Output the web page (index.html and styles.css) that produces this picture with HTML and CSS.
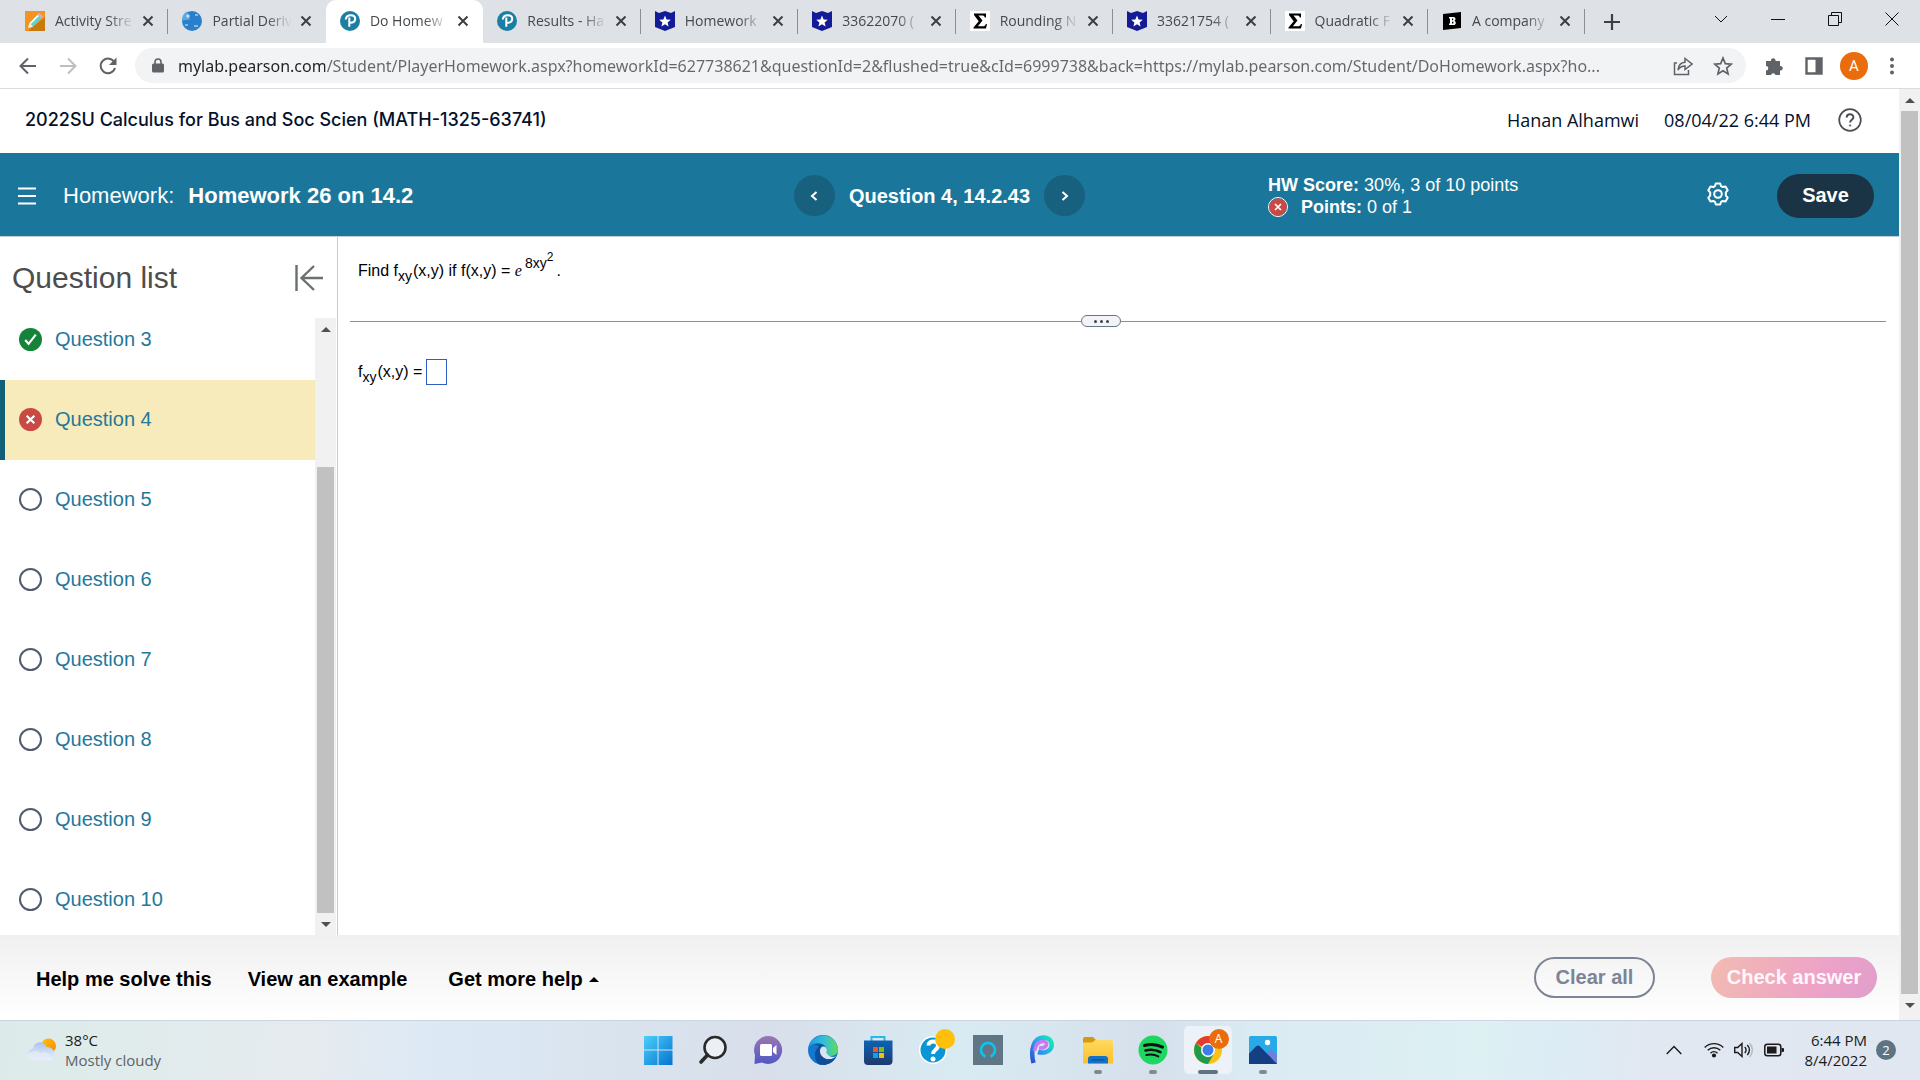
FILE: index.html
```html
<!DOCTYPE html>
<html lang="en">
<head>
<meta charset="utf-8">
<meta name="viewport" content="width=device-width, initial-scale=1">
<title>Do Homework - Homework 26 on 14.2</title>
<link rel="stylesheet" href="styles.css">
</head>
<body>
<svg class="defs" aria-hidden="true">
  <defs>
    <linearGradient id="win" x1="0" y1="0" x2="1" y2="1"><stop offset="0" stop-color="#4bd0fb"/><stop offset="1" stop-color="#0573d1"/></linearGradient>
    <linearGradient id="chat" x1="0" y1="0" x2="0" y2="1"><stop offset="0" stop-color="#9a77b4"/><stop offset="1" stop-color="#5058c4"/></linearGradient>
    <linearGradient id="edgeTop" x1="0" y1="0" x2="1" y2="0"><stop offset="0" stop-color="#1d9bdc"/><stop offset=".5" stop-color="#32bedd"/><stop offset="1" stop-color="#5fdc5c"/></linearGradient>
    <linearGradient id="store" x1="0" y1="0" x2="0" y2="1"><stop offset="0" stop-color="#0b64b4"/><stop offset="1" stop-color="#1f3a6b"/></linearGradient>
    <linearGradient id="swirl" x1="0" y1="1" x2="1" y2="0"><stop offset="0" stop-color="#2b4fd0"/><stop offset=".5" stop-color="#2f9df0"/><stop offset="1" stop-color="#12f0b4"/></linearGradient>
    <linearGradient id="folder" x1="0" y1="0" x2="0" y2="1"><stop offset="0" stop-color="#ffd95e"/><stop offset="1" stop-color="#fbc02c"/></linearGradient>
    <linearGradient id="cloud" x1="0" y1="0" x2="0" y2="1"><stop offset="0" stop-color="#a9c4f0"/><stop offset="1" stop-color="#eef2fa"/></linearGradient>
    <linearGradient id="sun" x1="0" y1="0" x2="1" y2="1"><stop offset="0" stop-color="#fcc40c"/><stop offset="1" stop-color="#f98506"/></linearGradient>
    <symbol id="pearson" viewBox="0 0 20 20"><circle cx="10" cy="10" r="10" fill="#1b7fa3"/><path d="M5.800 8.500C6 5.800 8 4.200 10.800 4.200c2.700 0 4.400 1.500 4.400 3.600 0 2.600-2.300 4-5 4M9.300 6.500v9.300" fill="none" stroke="#fff" stroke-width="2"/></symbol>
    <symbol id="shield" viewBox="0 0 20 20"><path d="M0 0l4 2 6-2 6 2 4-2v16l-10 4-10-4z" fill="#131c96"/><path d="M10 4.500l1.600 3.900 4.200.3-3.200 2.700 1 4.100-3.600-2.200-3.600 2.200 1-4.100-3.200-2.700 4.200-.3z" fill="#fff"/></symbol>
    <symbol id="sigma" viewBox="0 0 20 20"><path d="M0 0h20v20H0z" fill="#fff"/><path d="M4 2.500h12v4h-1.200c-.4-1.600-1-2-3-2H8.500l4 5-4.600 5.800h4.600c2 0 2.800-.7 3.400-2.300H17L16 17.500H3.500v-1l5.200-6.300L4 4z" fill="#000"/></symbol>
    <symbol id="x" viewBox="0 0 12 12"><path d="M1.500 1.500l9 9m0-9l-9 9" stroke="#3c4043" stroke-width="2" fill="none"/></symbol>
    <symbol id="wrong" viewBox="0 0 24 24"><circle cx="12" cy="12" r="12" fill="#c94a45"/><path d="M8 8l8 8m0-8l-8 8" stroke="#fff" stroke-width="2.200" fill="none"/></symbol>
  </defs>
</svg>

<div class="tabstrip">
  <nav class="tabs" aria-label="Open tabs">
    <div class="tab"><svg class="fav" viewBox="0 0 20 20"><path d="M0 0h20v20H0z" fill="#f5941d"/><path d="M20 6v14H3z" fill="#c97a0c"/><path d="M3 17l1.500-5L14 2.500l3.500 3.500L8 15.500z" fill="#5fd3c8"/><path d="M4.500 12L14 2.500l1.200 1.200-9.500 9.500z" fill="#fff"/><path d="M12.500 4L14.500 2l4 3.500-2.300 2z" fill="#f0a0b0"/><path d="M3 17l1.500-5 3.500 3.500z" fill="#fff1d8"/></svg><span class="tab-title">Activity Stre</span><button class="close" aria-label="Close tab"><svg><use href="#x"/></svg></button></div>
    <div class="tab flush"><svg class="fav" viewBox="0 0 20 20"><circle cx="10" cy="10" r="10" fill="#2a7fcb"/><path d="M5 0.500a10 10 0 0 0-5 9l8-1z" fill="#5ea7e2"/><path d="M4 5h4M6 3v4M13 4h3M3 14h3M12 15h4" stroke="#e6f1fb" stroke-width="1" fill="none"/></svg><span class="tab-title">Partial Deriv</span><button class="close" aria-label="Close tab"><svg><use href="#x"/></svg></button></div>
    <div class="tab active"><svg class="fav"><use href="#pearson"/></svg><span class="tab-title">Do Homew</span><button class="close" aria-label="Close tab"><svg><use href="#x"/></svg></button></div>
    <div class="tab"><svg class="fav"><use href="#pearson"/></svg><span class="tab-title">Results - Ha</span><button class="close" aria-label="Close tab"><svg><use href="#x"/></svg></button></div>
    <div class="tab"><svg class="fav"><use href="#shield"/></svg><span class="tab-title">Homework</span><button class="close" aria-label="Close tab"><svg><use href="#x"/></svg></button></div>
    <div class="tab"><svg class="fav"><use href="#shield"/></svg><span class="tab-title">33622070 (</span><button class="close" aria-label="Close tab"><svg><use href="#x"/></svg></button></div>
    <div class="tab"><svg class="fav"><use href="#sigma"/></svg><span class="tab-title">Rounding N</span><button class="close" aria-label="Close tab"><svg><use href="#x"/></svg></button></div>
    <div class="tab"><svg class="fav"><use href="#shield"/></svg><span class="tab-title">33621754 (</span><button class="close" aria-label="Close tab"><svg><use href="#x"/></svg></button></div>
    <div class="tab"><svg class="fav"><use href="#sigma"/></svg><span class="tab-title">Quadratic F</span><button class="close" aria-label="Close tab"><svg><use href="#x"/></svg></button></div>
    <div class="tab"><svg class="fav" viewBox="0 0 20 20"><path d="M1 3l18-2v16L1 19z" fill="#000"/><path d="M7 6h4.500c2.500 0 2.500 3.500.8 3.900 2.200.4 2 4.100-.8 4.100H7v-1.500h1v-5H7z" fill="#fff"/><path d="M10 7.500h1.200v1.700H10zM10 10.700h1.400v1.800H10z" fill="#000"/></svg><span class="tab-title">A company</span><button class="close" aria-label="Close tab"><svg><use href="#x"/></svg></button></div>
  </nav>
  <button class="newtab" aria-label="New tab"><svg viewBox="0 0 16 16"><path d="M8 0v16M0 8h16" stroke="#3c4043" stroke-width="2.200"/></svg></button>
  <div class="winctl">
    <button aria-label="Search tabs"><svg viewBox="0 0 14 14"><path d="M1 4l6 6 6-6"/></svg></button>
    <button aria-label="Minimize"><svg viewBox="0 0 14 14"><path d="M0 7.500h14"/></svg></button>
    <button aria-label="Restore"><svg viewBox="0 0 14 14"><path d="M.5 3.500h10v10h-10zM3.500 3V.5h10v10H11"/></svg></button>
    <button aria-label="Close"><svg viewBox="0 0 14 14"><path d="M.5.5l13 13m0-13l-13 13"/></svg></button>
  </div>
</div>

<div class="toolbar">
  <button class="tool" aria-label="Back"><svg viewBox="0 0 20 20"><path d="M18 10H3M10 2.500L2.500 10l7.500 7.500" fill="none" stroke="#5f6368" stroke-width="2"/></svg></button>
  <button class="tool" aria-label="Forward"><svg viewBox="0 0 20 20"><path d="M2 10h15M10 2.500l7.500 7.500-7.500 7.500" fill="none" stroke="#bcbfc2" stroke-width="2"/></svg></button>
  <button class="tool" aria-label="Reload"><svg viewBox="0 0 20 20"><path d="M16.500 6.500A7.300 7.300 0 1 0 17 12" fill="none" stroke="#5f6368" stroke-width="2"/><path d="M18.500 1.500v7.500H11z" fill="#5f6368"/></svg></button>
  <div class="omnibox">
    <svg class="lock" viewBox="0 0 12 15"><path d="M3 6V4a3 3 0 0 1 6 0v2" fill="none" stroke="#5f6368" stroke-width="1.600"/><rect y="5.500" width="12" height="9" rx="1.500" fill="#5f6368"/></svg>
    <input class="url" type="text" aria-label="Address" value="mylab.pearson.com/Student/PlayerHomework.aspx?homeworkId=627738621&amp;questionId=2&amp;flushed=true&amp;cId=6999738&amp;back=https://mylab.pearson.com/Student/DoHomework.aspx?ho...">
    <button class="tool" aria-label="Share"><svg viewBox="0 0 20 20"><path d="M4 7H1.500v11.500h14V14M5 14c.5-5 3-7.500 7-7.700V2.500L19 8l-7 5.500V10c-3 0-5.500 1.500-7 4z" fill="none" stroke="#5f6368" stroke-width="1.500"/></svg></button>
    <button class="tool" aria-label="Bookmark"><svg viewBox="0 0 20 20"><path d="M10 2l2.300 5.600 6 .5-4.600 3.900 1.400 5.900L10 14.800l-5.100 3.100L6.300 12 1.700 8.100l6-.5z" fill="none" stroke="#5f6368" stroke-width="1.700"/></svg></button>
  </div>
  <button class="tool" aria-label="Extensions"><svg viewBox="0 0 20 20"><path d="M2 5h5a2.300 2.300 0 1 1 4.500 0H16v5a2.300 2.300 0 1 1 0 4.500V19h-4.500a2.300 2.300 0 0 0-4.500 0H2v-4.500a2.300 2.300 0 0 0 0-4.600z" fill="#5f6368"/></svg></button>
  <button class="tool" aria-label="Side panel"><svg viewBox="0 0 20 20"><path d="M2.500 2.500h15v15h-15z" fill="none" stroke="#5f6368" stroke-width="2.400"/><path d="M11.500 2H18v16h-6.500z" fill="#5f6368"/></svg></button>
  <button class="avatar" aria-label="Profile">A</button>
  <button class="tool more" aria-label="Menu"><svg viewBox="0 0 20 20"><g fill="#5f6368"><circle cx="10" cy="3.500" r="2"/><circle cx="10" cy="10" r="2"/><circle cx="10" cy="16.500" r="2"/></g></svg></button>
</div>

<div class="viewport">
  <div class="page">
    <header class="course">
      <h1 class="course-name">2022SU Calculus for Bus and Soc Scien (MATH-1325-63741)</h1>
      <span class="who">Hanan Alhamwi</span>
      <span class="when">08/04/22 6:44 PM</span>
      <button class="help" aria-label="Help"><svg viewBox="0 0 24 24" fill="none" stroke="#4a4f55"><circle cx="12" cy="12" r="10.800" stroke-width="1.700"/><path d="M8.700 9.500c0-4.300 6.700-4.300 6.700-.3 0 2.500-3.300 2.600-3.300 5.300" stroke-width="2"/><circle cx="12.100" cy="17.500" r=".7"/></svg></button>
    </header>

    <div class="bluebar">
      <div class="assignment">
        <button class="burger" aria-label="Menu"><svg viewBox="0 0 18 18"><path d="M0 1.500h18M0 9h18M0 16.500h18" stroke="#fff" stroke-width="2"/></svg></button>
        <h2 class="hw">Homework: <b>Homework 26 on 14.2</b></h2>
      </div>
      <div class="qnav">
        <button class="round" aria-label="Previous question"><svg viewBox="0 0 10 10"><path d="M7.500 1L3 5l4.500 4"/></svg></button>
        <span class="qname">Question 4, 14.2.43</span>
        <button class="round" aria-label="Next question"><svg viewBox="0 0 10 10"><path d="M2.500 1L7 5 2.500 9"/></svg></button>
      </div>
      <div class="status">
        <div class="score">
          <div><b>HW Score:</b> 30%, 3 of 10 points</div>
          <div class="points"><svg class="badge-x"><use href="#wrong"/></svg><span><b>Points:</b> 0 of 1</span></div>
        </div>
        <button class="gear" aria-label="Settings"><svg viewBox="0 0 24 24" fill="none" stroke="#fff" stroke-width="2"><path d="M9.800 1.500h4.400l.9 2.700 1.600.9 2.800-.6 2.200 3.800-1.900 2.100v3.200l1.900 2.100-2.200 3.800-2.800-.6-1.600.9-.9 2.700H9.800l-.9-2.700-1.600-.9-2.800.6-2.200-3.800 1.900-2.100v-3.200L2.300 8.300l2.200-3.800 2.800.6 1.600-.9z" stroke-linejoin="round"/><circle cx="12" cy="12" r="3.800"/></svg></button>
        <button class="save">Save</button>
      </div>
    </div>

    <div class="work">
      <aside class="sidebar">
        <div class="side-head">
          <h3>Question list</h3>
          <button class="collapse" aria-label="Collapse question list"><svg viewBox="0 0 28 26" fill="none" stroke="#6a7070" stroke-width="2.400"><path d="M1.500 0v26M28 13H7M19 1L6.500 13 19 25"/></svg></button>
        </div>
        <div class="side-body">
          <div class="list-clip">
            <ol class="questions">
              <li><a href="#q3"><svg class="mark" viewBox="0 0 24 24"><circle cx="12" cy="12" r="12" fill="#16833a"/><path d="M6.500 12.500l3.500 4L17.500 7" stroke="#fff" stroke-width="2.200" fill="none"/></svg>Question 3</a></li>
              <li class="current"><a href="#q4"><svg class="mark"><use href="#wrong"/></svg>Question 4</a></li>
              <li><a href="#q5"><span class="mark ring"></span>Question 5</a></li>
              <li><a href="#q6"><span class="mark ring"></span>Question 6</a></li>
              <li><a href="#q7"><span class="mark ring"></span>Question 7</a></li>
              <li><a href="#q8"><span class="mark ring"></span>Question 8</a></li>
              <li><a href="#q9"><span class="mark ring"></span>Question 9</a></li>
              <li><a href="#q10"><span class="mark ring"></span>Question 10</a></li>
            </ol>
          </div>
          <div class="scrollbar side-scroll"><i class="arrow up"></i><i class="track"></i><i class="thumb"></i><i class="arrow down"></i></div>
        </div>
      </aside>
      <main class="problem">
        <p class="prompt math">Find f<sub>xy</sub>(x,y) if f(x,y) = <i>e</i><span class="pow">8xy<span class="pow2">2</span></span>.</p>
        <div class="divider"><span class="line before"></span><button class="grip" aria-label="Resize"><i></i><i></i><i></i></button><span class="line after"></span></div>
        <p class="answer math"><label for="ans">f<sub>xy</sub>(x,y) =</label><input id="ans" class="blank" type="text"></p>
      </main>
    </div>

    <footer class="actions">
      <button class="link">Help me solve this</button>
      <button class="link">View an example</button>
      <button class="link more-help">Get more help <i class="caret"></i></button>
      <button class="pill clear">Clear all</button>
      <button class="pill check">Check answer</button>
    </footer>
  </div>
  <div class="scrollbar page-scroll"><i class="arrow up"></i><i class="thumb"></i><i class="arrow down"></i></div>
</div>

<div class="taskbar">
  <div class="weather">
    <svg viewBox="0 0 30 24"><circle cx="21.500" cy="8" r="7.500" fill="url(#sun)"/><path d="M5 22a6 6 0 0 1 1-11.500C7.500 3 17 2 19.500 9c5 0 8 3 8 7 0 3-2 6-5 6z" fill="url(#cloud)"/><path d="M4.500 23a4.500 4.500 0 0 1 .5-9c3-2 7-1 8 2 3-3 9-2 9 3 0 2-2 4-4 4z" fill="#e4ebf7" opacity=".8"/></svg>
    <div><div class="temp">38°C</div><div class="sky">Mostly cloudy</div></div>
  </div>
  <nav class="apps" aria-label="Taskbar apps">
    <button class="app" aria-label="Start"><svg viewBox="0 0 30 30" fill="url(#win)"><path d="M1 1h13.500v13.500H1zM15.500 1H29.500v13.500H15.500zM1 15.500h13.500V30H1zM15.500 15.500H29.500V30H15.500z"/></svg></button>
    <button class="app" aria-label="Search"><svg viewBox="0 0 30 30" fill="none" stroke="#2a2a2a"><circle cx="17" cy="12.500" r="10.500" stroke-width="2.600" fill="#eceff4"/><path d="M9.500 20L3 27" stroke-width="3.600" stroke-linecap="round"/></svg></button>
    <button class="app" aria-label="Chat"><svg viewBox="0 0 30 30"><path d="M15 1a14 14 0 1 1-6 26.600L1.500 29 2 20A14 14 0 0 1 15 1z" fill="url(#chat)"/><rect x="7" y="9" width="12" height="12" rx="1.500" fill="#fff"/><path d="M20 13l3.500-3v10L20 17z" fill="#fff"/></svg></button>
    <button class="app" aria-label="Edge"><svg viewBox="0 0 30 30"><circle cx="15" cy="15" r="15" fill="#1478cf"/><path d="M1 11C5 3 14 3 17.500 10c-5 1-6.500 7-3 11 4 5 10 4 13.500.5A15 15 0 0 1 11 29.500C5 24 6 15 11 11.500 7 8 3 9 1 11z" fill="#0c4f9e"/><path d="M.5 12A15 15 0 0 1 30 14c0 6-4.500 7-8 7-4 0-5-2-4-3.500C20 13 17 9 11 8.500 6 8 2.500 10 .5 12z" fill="url(#edgeTop)"/><path d="M18.200 17.500c1.500-3 .3-6-3.500-6-3 1-4 6-.5 10 3 3.500 9 4 14 0-3 1-8 .5-10-4z" fill="#dbe3ee"/><path d="M14.200 21.500c3 3.500 9 4 14 0-2.500 5-7 8-12 8.300-4-3-5-6-2-8.300z" fill="#124c93"/></svg></button>
    <button class="app" aria-label="Store"><svg viewBox="0 0 30 30"><path d="M8.500 7V2h13v5" fill="none" stroke="#25b9f0" stroke-width="2"/><path d="M1 5.500h28.500V26a4 4 0 0 1-4 4H5a4 4 0 0 1-4-4z" fill="url(#store)"/><path d="M10 12h5v5h-5z" fill="#f35325"/><path d="M16 12h5v5h-5z" fill="#81bc06"/><path d="M10 18h5v5h-5z" fill="#05a6f0"/><path d="M16 18h5v5h-5z" fill="#ffba08"/></svg></button>
    <button class="app" aria-label="Tips"><svg viewBox="0 0 30 30"><circle cx="15" cy="15" r="14" fill="#fff"/><circle cx="15" cy="15" r="12.500" fill="#0a95d4"/><path d="M10.500 10.500c0-5.500 9.500-5.500 9.500 0 0 4.500-5 4-5 8.500" stroke="#fff" stroke-width="4" fill="none"/><circle cx="15" cy="24" r="2.500" fill="#fff"/></svg><i class="dot"></i></button>
    <button class="app" aria-label="Alexa"><svg viewBox="0 0 30 30"><path d="M0 0h30v30H0z" fill="#5f7684"/><path d="M12.500 21.500a7 7 0 1 1 5 0" fill="none" stroke="#0cc5f5" stroke-width="2.500"/></svg></button>
    <button class="app" aria-label="PicsArt"><svg viewBox="0 0 30 30" fill="none"><path d="M5.500 28C2 14 6 3 15 2.500c8 0 10 6 8 10.500-2 4-8 5.500-13 4" stroke="url(#swirl)" stroke-width="4.500"/><path d="M6.500 16C8 8 12 6 16 6.500c5 1 3 7-5 6.500" stroke="#c779f2" stroke-width="3.500"/></svg></button>
    <button class="app" aria-label="File Explorer"><svg viewBox="0 0 30 30"><path d="M0 4a2 2 0 0 1 2-2h8l3 3-3 4H0z" fill="#d9960f"/><path d="M0 7.500h9L12.500 5H28a2 2 0 0 1 2 2v21.500H0z" fill="url(#folder)"/><path d="M5 28.500V24a3 3 0 0 1 3-3h14a3 3 0 0 1 3 3v4.500z" fill="#1172c8"/><path d="M8.500 25h13" stroke="#0b4a8c" stroke-width="1"/></svg><i class="run"></i></button>
    <button class="app" aria-label="Spotify"><svg viewBox="0 0 30 30"><circle cx="15" cy="15" r="14.500" fill="#1ed760"/><g fill="none" stroke="#111" stroke-linecap="round"><path d="M6.500 10.500c6-1.800 13-1 18 1.600" stroke-width="3"/><path d="M7.500 15.500c5-1.500 10.500-.8 15 1.700" stroke-width="2.500"/><path d="M8.300 20c4.500-1 8.500-.5 12 1.400" stroke-width="2"/></g></svg><i class="run"></i></button>
    <button class="app on" aria-label="Chrome"><svg viewBox="0 0 30 30"><circle cx="15" cy="15" r="14" fill="#fbc116"/><path d="M15 15L2.900 8A14 14 0 0 1 27.100 8z" fill="#e33b2e"/><path d="M15 15h-4L2.900 8A14 14 0 0 0 15 29l6-10.500z" fill="#229a4b"/><circle cx="15" cy="15" r="7" fill="#fff"/><circle cx="15" cy="15" r="5.500" fill="#3b7de9"/></svg><i class="prof">A</i><i class="run wide"></i></button>
    <button class="app" aria-label="Photos"><svg viewBox="0 0 30 30"><rect x="1" y="1" width="28" height="28" rx="1.500" fill="#28a9e8"/><path d="M12 29l8-12 3-3 6 6v9z" fill="#6d80dc"/><path d="M1 18.500L8.500 11c1-.8 2-.8 3 0L29 29H1z" fill="#143f83"/><circle cx="19.500" cy="7.500" r="2.700" fill="#fff"/></svg><i class="run"></i></button>
  </nav>
  <div class="tray">
    <button aria-label="Show hidden icons"><svg width="16" height="10" viewBox="0 0 16 10"><path d="M.7 9L8 1.500 15.300 9" fill="none" stroke="#1b1b1b" stroke-width="1.400"/></svg></button>
    <button class="net" aria-label="Network, sound and battery">
      <svg width="20" height="16" viewBox="0 0 20 16" fill="none" stroke="#1b1b1b" stroke-width="1.400"><path d="M.7 5.500a13.200 13.200 0 0 1 18.600 0M3.700 8.300a9 9 0 0 1 12.600 0M6.500 11.200a5 5 0 0 1 7 0"/><circle cx="10" cy="13.500" r="1.400" fill="#1b1b1b"/></svg>
      <svg width="20" height="16" viewBox="0 0 20 16" fill="none" stroke="#1b1b1b" stroke-width="1.400"><path d="M.7 5.500h3L8 1.500v13l-4.300-4h-3zM10.700 5a4 4 0 0 1 0 6M13.300 3a7 7 0 0 1 0 10"/><path d="M15.500 1a10 10 0 0 1 0 14" stroke="#b3b8c0"/></svg>
      <svg width="20" height="14" viewBox="0 0 20 14"><rect x=".8" y="1.300" width="16" height="11.400" rx="2.500" fill="none" stroke="#1b1b1b" stroke-width="1.500"/><path d="M3 3.500h9.500v7H3zM17.500 5h1.500a1 1 0 0 1 1 1v2a1 1 0 0 1-1 1h-1.500z" fill="#1b1b1b"/></svg>
    </button>
    <div class="clock"><div>6:44 PM</div><div>8/4/2022</div></div>
    <span class="count">2</span>
  </div>
</div>
</body>
</html>
```
FILE: styles.css
```css
* { box-sizing: border-box; }

body {
  margin: 0;
  height: 100vh;
  display: flex;
  flex-direction: column;
  overflow: hidden;
  background: #fff;
  color: #000;
  font-family: "Liberation Sans", Arial, sans-serif;
}

button {
  border: 0;
  padding: 0;
  background: none;
  color: inherit;
  font: inherit;
  display: flex;
  align-items: center;
  justify-content: center;
}

h1, h2, h3, p, ol { margin: 0; padding: 0; font-weight: 400; }
svg { display: block; flex: none; }
i { font-style: normal; }
.defs { position: absolute; width: 0; height: 0; }

/* Tab strip */
.tabstrip {
  height: 43px;
  flex: none;
  display: flex;
  background: #dee1e6;
}
.tabs { width: calc(82% + 11px); padding-left: 11px; display: flex; }
.tab {
  flex: 1 1 0;
  min-width: 0;
  position: relative;
  display: flex;
  align-items: center;
  padding: 0 14px 2px 14px;
  color: #45494d;
}
.tab::after {
  content: "";
  position: absolute;
  right: 0;
  top: 9px;
  width: 1px;
  height: 25px;
  background: #8a8d91;
}
.tab.active::after, .tab.flush::after { display: none; }
.tab.active { background: #fff; border-radius: 10px 10px 0 0; }
.fav { width: 20px; height: 20px; }
.tab-title {
  flex: 1;
  margin: 0 4px 0 10px;
  overflow: hidden;
  white-space: nowrap;
  font: 14px/20px "Open Sans", sans-serif;
  -webkit-mask-image: linear-gradient(90deg, #000 65%, transparent 95%);
  mask-image: linear-gradient(90deg, #000 65%, transparent 95%);
}
.close svg { width: 12px; height: 12px; }
.newtab { width: 54px; }
.newtab svg { width: 16px; height: 16px; }
.winctl { margin-left: auto; display: flex; padding-bottom: 5px; }
.winctl button { width: 57px; }
.winctl svg { width: 14px; height: 14px; fill: none; stroke: #111; }

/* Toolbar */
.toolbar {
  height: 46px;
  flex: none;
  display: flex;
  align-items: center;
  padding: 0 12px 0 8px;
  border-bottom: 1px solid #d9dbde;
}
.tool { width: 40px; height: 32px; flex: none; }
.tool svg { width: 20px; height: 20px; }
.tool.more { width: 32px; }
.omnibox {
  flex: 1;
  height: 35px;
  margin: 0 8px 0 7px;
  padding: 0 3px 0 17px;
  display: flex;
  align-items: center;
  border-radius: 18px;
  background: #f1f3f4;
}
.lock { width: 12px; height: 15px; margin-right: 14px; }
.url {
  flex: 1;
  min-width: 0;
  padding: 0;
  border: 0;
  outline: 0;
  font: 16px/24px "Noto Sans", "Open Sans", sans-serif;
  color: transparent;
  background: linear-gradient(90deg, #202124 147px, #63676b 147px);
  -webkit-background-clip: text;
  background-clip: text;
}
.avatar {
  width: 28px;
  height: 28px;
  margin: 0 8px 0 6px;
  border-radius: 50%;
  background: #ea6c0a;
  color: #fff;
  font: 15px/28px Roboto, sans-serif;
}

/* Page area */
.viewport { flex: 1; min-height: 0; display: flex; }
.page { flex: 1; min-width: 0; display: flex; flex-direction: column; }

.scrollbar {
  display: flex;
  flex-direction: column;
  align-items: center;
  background: #f1f1f1;
}
.thumb { background: #c1c1c1; width: 17px; }
.arrow { height: 22px; display: flex; align-items: center; flex: none; }
.arrow::before {
  content: "";
  border: 5px solid transparent;
}
.arrow.up::before { border-top: 0; border-bottom-color: #505050; }
.arrow.down::before { border-bottom: 0; border-top-color: #505050; }
.page-scroll { width: 21px; padding-bottom: 4px; }
.page-scroll .thumb { flex: 1; }

.course {
  height: 64px;
  flex: none;
  display: flex;
  align-items: center;
  padding: 0 37px 2px 25px;
  color: #05112a;
}
.course-name { flex: 1; font: 500 18px/24px Inter, sans-serif; }
.who, .when { font: 18px/24px "Open Sans", sans-serif; }
.who { margin-right: 25px; }
.when { margin-right: 27px; }
.help svg { width: 24px; height: 24px; }

.bluebar {
  height: 84px;
  flex: none;
  display: grid;
  grid-template-columns: minmax(0, 1fr) auto minmax(0, 1fr);
  align-items: center;
  padding: 2px 25px 0 5px;
  background: #1a779b;
  border-bottom: 1px solid #c3d0dc;
  color: #fff;
}
.assignment { display: flex; align-items: center; }
.burger { width: 44px; height: 44px; margin-right: 14px; }
.burger svg { width: 18px; height: 18px; }
.hw { font-size: 22px; line-height: 28px; }
.hw b { margin-left: 8px; }
.qnav { display: flex; align-items: center; gap: 14px; }
.qname { font-weight: 700; font-size: 20px; line-height: 24px; }
.round { width: 41px; height: 41px; border-radius: 50%; background: #17607e; }
.round svg { width: 10px; height: 10px; fill: none; stroke: #fff; stroke-width: 2; }
.status { display: flex; align-items: center; padding-left: 183px; }
.score { flex: 1; font-size: 18px; line-height: 22px; }
.points { display: flex; align-items: center; gap: 13px; }
.badge-x { width: 20px; height: 20px; border: 1px solid #fff; border-radius: 50%; }
.gear { margin-right: 47px; padding-bottom: 4px; }
.gear svg { width: 24px; height: 24px; }
.save {
  width: 97px;
  height: 44px;
  border-radius: 22px;
  background: #1b3445;
  font-weight: 700;
  font-size: 20px;
}

/* Question list and problem */
.work { flex: 1; min-height: 0; display: flex; }
.sidebar {
  width: 338px;
  flex: none;
  display: flex;
  flex-direction: column;
  border-right: 1px solid #c9c9d3;
}
.side-head {
  height: 81px;
  flex: none;
  display: flex;
  align-items: center;
  justify-content: space-between;
  padding: 0 14px 0 12px;
  color: #4d4d4d;
}
.side-head h3 { font-size: 30px; line-height: 32px; }
.collapse svg { width: 28px; height: 26px; }
.side-body { flex: 1; min-height: 0; display: flex; }
.list-clip { flex: 1; overflow: hidden; }
.questions { list-style: none; margin-top: -18px; }
.questions a {
  height: 80px;
  display: flex;
  align-items: center;
  gap: 13px;
  padding: 0 0 2px 19px;
  color: #24789a;
  font-size: 20px;
  text-decoration: none;
}
.questions .current { background: #f8ebbb; border-left: 5px solid #105e78; }
.questions .current a { padding-left: 14px; }
.mark { width: 23px; height: 23px; }
.ring { border: 2px solid #4f5c6b; border-radius: 50%; }
.side-scroll { width: 21px; margin-right: 1px; }
.side-scroll .track { flex: 127 1 0; }
.side-scroll .thumb { flex: 444 1 0; }

.problem { flex: 1; min-width: 0; padding: 20px 13px 0 12px; }
.math { font-size: 16px; line-height: 28px; padding-left: 8px; white-space: nowrap; }
.math sub { font-size: 14px; line-height: 0; vertical-align: -5px; margin-right: 1px; }
.math i { font: italic 16px/16px "Liberation Serif", serif; }
.pow { font-size: 14px; line-height: 0; vertical-align: 8px; margin: 0 3px; }
.pow2 { font-size: 12px; vertical-align: 7px; }
.prompt { height: 58px; }
.divider { height: 12px; display: flex; align-items: center; }
.line { height: 1px; background: #84919e; }
.line.before { flex: 731 1 0; }
.line.after { flex: 765 1 0; }
.grip {
  width: 40px;
  height: 12px;
  gap: 3px;
  border: 1px solid #66758a;
  border-radius: 6px;
  background: #f2f4f7;
}
.grip i { width: 3px; height: 3px; border-radius: 50%; background: #3c4550; }
.answer { margin-top: 31px; display: flex; align-items: center; }
.blank {
  width: 21px;
  height: 26px;
  margin-left: 4px;
  padding: 0;
  border: 1px solid #2f5ec4;
  background: #fff;
}

/* Action bar */
.actions {
  height: 85px;
  flex: none;
  display: flex;
  align-items: center;
  padding: 0 22px 0 36px;
  background: linear-gradient(#f0f0f0, #fff);
  font-weight: 700;
  font-size: 20px;
}
.link { margin-right: 36px; padding-top: 3px; }
.link + .link { margin-right: 41px; }
.caret {
  margin-left: 6px;
  border: 5px solid transparent;
  border-top: 0;
  border-bottom-color: #000;
}
.pill { height: 41px; border-radius: 21px; }
.clear { width: 121px; margin-left: auto; margin-right: 56px; border: 2px solid #7c8496; color: #7c8496; }
.actions .more-help { margin-right: 0; }
.check { width: 166px; background: linear-gradient(115deg, #f2bcb0, #eda2c8 65%, #df9fcb); color: #fff7fb; }

/* Taskbar */
.taskbar {
  height: 60px;
  flex: none;
  display: grid;
  grid-template-columns: minmax(0, 1fr) auto minmax(0, 1fr);
  align-items: center;
  padding-bottom: 1px;
  border-top: 1px solid #c9d5df;
  background: linear-gradient(95deg, #dcebea, #e6ebef 16%, #dce9f5 23%, #d9e3ee 33%, #d8dfea 40%, #d8ebf2 50%, #d6e0ec 60%, #daebf3 65%, #ddf0f2 77%, #dcecf5 81%, #e2e8f1 86%, #e0e7f1);
  font: 15px/20px "Open Sans", sans-serif;
  color: #1b1b1b;
}
.weather { display: flex; align-items: center; gap: 8px; padding-left: 27px; }
.weather svg { width: 30px; height: 24px; }
.sky { color: #5c6265; }
.apps { display: flex; gap: 7px; }
.app { position: relative; width: 48px; height: 48px; border-radius: 5px; }
.app svg { width: 30px; height: 30px; }
.app.on { background: #edf1f8; }
.dot {
  position: absolute;
  right: 2px;
  top: 3px;
  width: 20px;
  height: 20px;
  border-radius: 50%;
  background: #ffbf0a;
}
.prof {
  position: absolute;
  right: 3px;
  top: 3px;
  width: 20px;
  height: 20px;
  border-radius: 50%;
  background: #ea6c0a;
  color: #fff;
  font-size: 12px;
}
.run {
  position: absolute;
  bottom: 0;
  left: 20px;
  width: 8px;
  height: 4px;
  border-radius: 2px;
  background: #85898e;
}
.run.wide { left: 14px; width: 20px; background: #5f7482; }
.tray { display: flex; align-items: center; justify-content: flex-end; padding-right: 24px; }
.net { gap: 10px; margin: 0 16px 0 22px; }
.clock { width: 67px; margin-right: 9px; text-align: right; }
.count {
  width: 20px;
  height: 20px;
  border-radius: 50%;
  background: #5f7482;
  color: #fff;
  font-size: 13px;
  text-align: center;
}
```
